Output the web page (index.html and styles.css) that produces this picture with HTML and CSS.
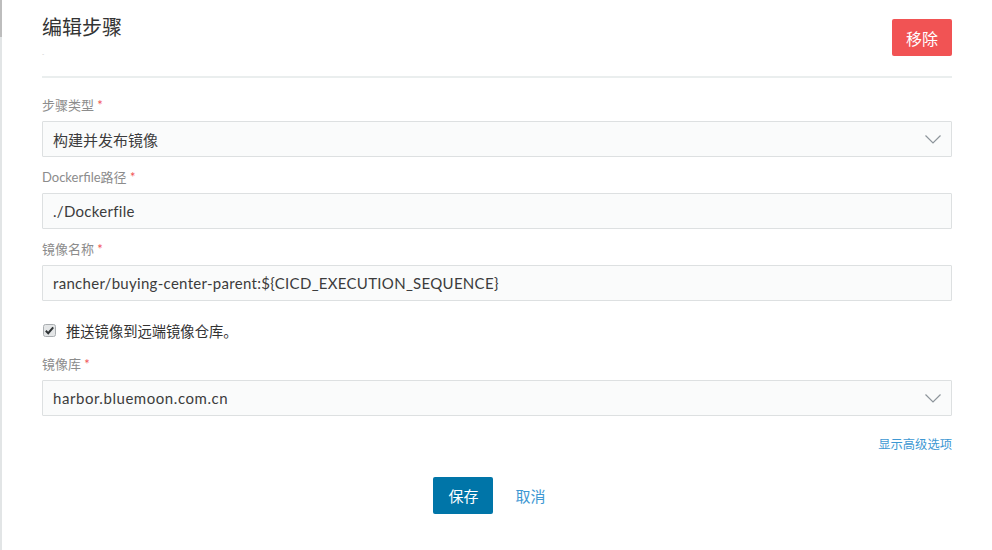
FILE: index.html
```html
<!DOCTYPE html>
<html lang="zh">
<head>
<meta charset="utf-8">
<link rel="stylesheet" href="styles.css">
</head>
<body>
<div class="page">
  <div class="edge"></div>
  <div class="main">
    <div class="header">
      <div class="titles">
        <h1 class="title">编辑步骤</h1>
        <div class="subtitle">-</div>
      </div>
      <button class="btn btn-danger">移除</button>
    </div>
    <div class="divider"></div>

    <div class="field">
      <label class="label">步骤类型 <span class="req">*</span></label>
      <div class="control select">
        <span>构建并发布镜像</span>
        <svg class="chev" width="16" height="9" viewBox="0 0 16 9"><path d="M0.5 0.5 L8 8 L15.5 0.5" fill="none" stroke="#8d959b" stroke-width="1.2"/></svg>
      </div>
    </div>

    <div class="field">
      <label class="label">Dockerfile路径 <span class="req">*</span></label>
      <div class="control input"><span>./Dockerfile</span></div>
    </div>

    <div class="field">
      <label class="label">镜像名称 <span class="req">*</span></label>
      <div class="control input"><span>rancher/buying-center-parent:${CICD_EXECUTION_SEQUENCE}</span></div>
    </div>

    <div class="check-row">
      <span class="checkbox">
        <svg width="13" height="13" viewBox="0 0 13 13"><rect x="0.5" y="0.5" width="12" height="12" rx="2" fill="#e4e6e7" stroke="#a9adb0"/><path d="M2.8 6.8 L5.2 9.2 L10.2 3.4" fill="none" stroke="#2f3335" stroke-width="2"/></svg>
      </span>
      <span class="check-text">推送镜像到远端镜像仓库。</span>
    </div>

    <div class="field field-last">
      <label class="label">镜像库 <span class="req">*</span></label>
      <div class="control select">
        <span class="wide">harbor.bluemoon.com.cn</span>
        <svg class="chev" width="16" height="9" viewBox="0 0 16 9"><path d="M0.5 0.5 L8 8 L15.5 0.5" fill="none" stroke="#8d959b" stroke-width="1.2"/></svg>
      </div>
    </div>

    <div class="advanced"><a class="link">显示高级选项</a></div>

    <div class="actions">
      <button class="btn btn-primary">保存</button>
      <a class="link cancel">取消</a>
    </div>
  </div>
</div>
</body>
</html>
```

FILE: styles.css
```css
html, body {
  margin: 0;
  padding: 0;
  background: #ffffff;
}
body {
  font-family: "Lato", "Noto Sans CJK SC", sans-serif;
  color: #333;
  width: 992px;
  height: 550px;
  overflow: hidden;
}
.page {
  display: flex;
  height: 550px;
}
.edge {
  width: 2px;
  flex: none;
  background: linear-gradient(#bdbdbd 0, #bdbdbd 37px, #e2e5e6 37px, #e2e5e6 100%);
}
.main {
  width: 910px;
  margin-left: 40px;
  display: flex;
  flex-direction: column;
}
.header {
  display: flex;
  justify-content: space-between;
  align-items: flex-start;
  padding-top: 19px;
}
.title {
  margin: -5px 0 0 0;
  font-size: 20px;
  font-weight: 400;
  line-height: 26px;
  color: #333;
}
.subtitle {
  font-size: 6px;
  line-height: 8px;
  color: #bbb;
  margin-top: 10px;
}
.btn {
  border: none;
  border-radius: 2px;
  font-family: "Lato", "Noto Sans CJK SC", sans-serif;
  font-size: 15px;
  color: #fff;
  height: 37px;
  width: 60px;
  padding: 0;
  cursor: pointer;
}
.btn-danger {
  background: #f15354;
  font-size: 16px;
}
.btn-primary {
  background: #0075a8;
}
.divider {
  height: 2px;
  background: #eaeeee;
  margin-top: 18px;
}
.field {
  display: flex;
  flex-direction: column;
  margin-top: 18px;
}
.field + .field {
  margin-top: 11px;
}
.label {
  font-size: 13px;
  line-height: 18px;
  color: #8c8c8c;
  margin-bottom: 7px;
}
.req {
  color: #f15354;
}
.control {
  box-sizing: border-box;
  height: 36px;
  border: 1px solid #dde0e1;
  background: #fafbfb;
  border-radius: 1px;
  display: flex;
  align-items: center;
  justify-content: space-between;
  padding: 0 10px 0 10px;
  font-size: 15px;
  letter-spacing: 0.3px;
  color: #3c3c3c;
}
.select {
  letter-spacing: 0;
}
.wide {
  letter-spacing: 0.55px;
}
.chev {
  display: block;
}
.check-row {
  display: flex;
  align-items: center;
  margin-top: 19px;
  height: 20px;
}
.checkbox {
  display: flex;
  margin-left: 1px;
  margin-right: 10px;
}
.check-text {
  font-size: 14.3px;
  color: #333;
}
.field-last {
  margin-top: 15px;
}
.advanced {
  display: flex;
  justify-content: flex-end;
  margin-top: 20px;
}
.link {
  font-size: 12.3px;
  line-height: 18px;
  color: #3d98d3;
  cursor: pointer;
}
.actions {
  display: flex;
  justify-content: center;
  align-items: center;
  margin-top: 23px;
  gap: 22px;
}
.cancel {
  font-size: 15px;
  margin-right: 15px;
}
```
